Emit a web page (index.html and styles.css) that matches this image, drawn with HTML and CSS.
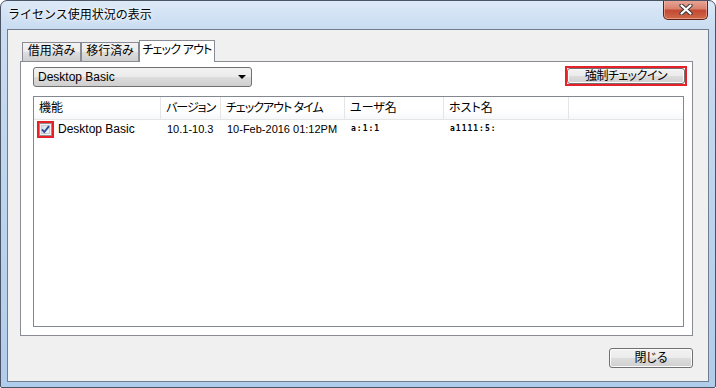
FILE: index.html
```html
<!DOCTYPE html>
<html lang="ja">
<head>
  <meta charset="UTF-8">
  <title>ライセンス使用状況の表示</title>
  <link rel="stylesheet" href="styles.css">
</head>
<body>
  <div class="window">
    <!-- タイトルバー -->
    <div class="titlebar">
      <span class="title">ライセンス使用状況の表示</span>
      <button class="close-btn" aria-label="閉じる">
        <svg width="16" height="11" viewBox="0 0 16 11">
          <path d="M3.5 1.5 L12.5 9.5 M12.5 1.5 L3.5 9.5" stroke="#3a3a3a" stroke-width="4.2" stroke-linecap="round"/>
          <path d="M3.5 1.5 L12.5 9.5 M12.5 1.5 L3.5 9.5" stroke="#ffffff" stroke-width="2.2" stroke-linecap="round"/>
        </svg>
      </button>
    </div>

    <div class="client">
      <!-- タブ -->
      <div class="tabs">
        <div class="tab tab-borrowed">借用済み</div>
        <div class="tab tab-moved">移行済み</div>
        <div class="tab tab-checkout active">チェック アウト</div>
      </div>

      <div class="panel">
        <div class="toolbar">
          <div class="combo">
            <span>Desktop Basic</span>
            <span class="combo-arrow"></span>
          </div>
          <div class="highlight">
            <button class="btn btn-checkin">強制チェックイン</button>
          </div>
        </div>

        <!-- リスト -->
        <div class="list">
          <div class="list-head">
            <div class="col">機能</div>
            <div class="col kana">バージョン</div>
            <div class="col kana">チェックアウト タイム</div>
            <div class="col">ユーザ名</div>
            <div class="col">ホスト名</div>
            <div class="col last"></div>
          </div>
          <div class="list-row">
            <div class="cell first">
              <span class="highlight check-mark">
                <svg width="13" height="13" viewBox="0 0 13 13">
                  <defs>
                    <linearGradient id="cbg" x1="0" y1="0" x2="1" y2="1">
                      <stop offset="0" stop-color="#d6dbe3"/>
                      <stop offset="1" stop-color="#f8f9fb"/>
                    </linearGradient>
                  </defs>
                  <rect x="0.5" y="0.5" width="12" height="12" fill="#f4f4f4" stroke="#8e8f8f"/>
                  <rect x="2.5" y="2.5" width="8" height="8" fill="url(#cbg)" stroke="#c4c8cf"/>
                  <path d="M3 6.3 L5.3 9 L10 3.2" fill="none" stroke="#2c4c9a" stroke-width="1.9"/>
                </svg>
              </span>
              <span>Desktop Basic</span>
            </div>
            <div class="cell num">10.1-10.3</div>
            <div class="cell num">10-Feb-2016 01:12PM</div>
            <div class="cell masked">a:1:1</div>
            <div class="cell masked">a1111:5:</div>
            <div class="cell"></div>
          </div>
        </div>
      </div>

      <div class="footer">
        <button class="btn btn-close">閉じる</button>
      </div>
    </div>
  </div>
</body>
</html>
```

FILE: styles.css
```css
/* 全体 */
body {
  margin: 0;
  background: #ffffff;
  font-family: "Liberation Sans", "Noto Sans CJK JP", sans-serif;
  font-size: 12px;
  color: #000000;
  font-feature-settings: "palt";
  white-space: nowrap;
}

/* ウィンドウ枠 */
.window {
  width: 716px;
  height: 388px;
  box-sizing: border-box;
  border: 1px solid #4a5464;
  border-radius: 7px 7px 2px 2px;
  padding: 0 6px 5px 6px;
  display: flex;
  flex-direction: column;
  background: linear-gradient(to bottom, #dce9f7 0px, #c9dcf1 28px, #bcd4ee 200px, #b1cdec 100%);
  overflow: hidden;
}

.titlebar {
  height: 28px;
  display: flex;
  align-items: flex-start;
  flex-shrink: 0;
}

.title {
  font-family: "Noto Sans CJK JP", sans-serif;
  font-feature-settings: normal;
  font-size: 12px;
  line-height: 16px;
  padding: 5px 0 0 1px;
  color: #000000;
  text-shadow: 0 0 6px #ffffff, 0 0 3px #ffffff;
}

.close-btn {
  margin: -1px 1px 0 auto;
  width: 45px;
  height: 20px;
  padding: 0;
  border: 1px solid #5a2219;
  border-top: none;
  border-radius: 0 0 5px 5px;
  background: linear-gradient(to bottom, #e9a99b 0%, #d9826e 45%, #c44a33 55%, #cf6a4a 100%);
  display: flex;
  align-items: center;
  justify-content: center;
  box-shadow: inset 0 0 0 1px rgba(255, 200, 190, 0.5);
}

/* クライアント領域 */
.client {
  flex: 1;
  border: 1px solid #6f7d8e;
  background: #f0f0f0;
  padding: 10px 15px 0 12px;
  display: flex;
  flex-direction: column;
}

/* タブ */
.tabs {
  display: flex;
  align-items: flex-end;
  height: 21px;
  padding-left: 2px;
  flex-shrink: 0;
  position: relative;
  z-index: 1;
}

.tab {
  box-sizing: border-box;
  height: 19px;
  border: 1px solid #898c95;
  border-bottom: none;
  background: linear-gradient(to bottom, #f2f2f2 0%, #ebebeb 50%, #dddddd 51%, #cfcfcf 100%);
  text-align: center;
  line-height: 17px;
}

.tab-borrowed { width: 59px; }
.tab-moved { width: 58px; }
.tab-checkout { width: 76px; letter-spacing: -0.8px; }

.tab.active {
  height: 22px;
  margin-bottom: -1px;
  background: #ffffff;
  line-height: 18px;
}

.panel {
  flex: 1;
  border: 1px solid #898c95;
  background: #ffffff;
  padding: 4px 5px 8px 12px;
  display: flex;
  flex-direction: column;
}

.toolbar {
  display: flex;
  justify-content: space-between;
  align-items: flex-start;
  height: 21px;
  flex-shrink: 0;
}

.combo {
  margin-top: 1px;
  box-sizing: border-box;
  width: 219px;
  height: 20px;
  border: 1px solid #707070;
  border-radius: 3px;
  background: linear-gradient(to bottom, #f2f2f2 0%, #ebebeb 50%, #dddddd 51%, #cfcfcf 100%);
  display: flex;
  align-items: center;
  justify-content: space-between;
  padding: 0 4px 0 4px;
}

.combo-arrow {
  width: 0;
  height: 0;
  border-left: 4px solid transparent;
  border-right: 4px solid transparent;
  border-top: 4px solid #000000;
  margin-right: 1px;
}

/* 赤枠の強調 */
.highlight {
  border: 2px solid #e8202a;
  display: flex;
}

.btn {
  font: inherit;
  box-sizing: border-box;
  border: 1px solid #707070;
  border-radius: 3px;
  background: linear-gradient(to bottom, #f2f2f2 0%, #ebebeb 50%, #dddddd 51%, #cfcfcf 100%);
  padding: 0;
  color: #000000;
  box-shadow: inset 0 0 0 1px #fcfcfc;
}

.btn-checkin {
  width: 118px;
  height: 16px;
  line-height: 13px;
  letter-spacing: -0.5px;
}

/* リスト */
.list {
  flex: 1;
  margin: 9px 3px 0 0;
  border: 1px solid #828790;
  background: #ffffff;
}

.list-head,
.list-row {
  display: grid;
  grid-template-columns: 127px 60px 124px 99px 125px 1fr;
}

.list-head {
  height: 23px;
  box-sizing: border-box;
  border-bottom: 1px solid #e5e5e5;
  background: linear-gradient(to bottom, #ffffff 0%, #ffffff 60%, #f7f8fa 100%);
}

.list-head .col {
  border-right: 1px solid #e5e5e5;
  padding-left: 5px;
  line-height: 22px;
  overflow: hidden;
}

.list-head .col.kana {
  letter-spacing: -1px;
}

.list-head .col.last {
  border-right: none;
}

.list-row {
  height: 18px;
}

.cell {
  padding-left: 5px;
  line-height: 18px;
}

.cell.first {
  display: flex;
  align-items: center;
  gap: 4px;
  padding-left: 3px;
}

.check-mark {
  width: 13px;
  height: 13px;
}

.cell.num {
  font-size: 11px;
  padding-left: 6px;
}

.cell.masked {
  font-family: "DejaVu Sans Mono", monospace;
  font-size: 8px;
  font-weight: bold;
  letter-spacing: 1px;
  padding-left: 6px;
}

/* 下部ボタン */
.footer {
  height: 45px;
  flex-shrink: 0;
  display: flex;
  justify-content: flex-end;
  align-items: flex-start;
  padding-top: 12px;
  box-sizing: border-box;
}

.btn-close {
  width: 84px;
  height: 20px;
  line-height: 17px;
}
```
